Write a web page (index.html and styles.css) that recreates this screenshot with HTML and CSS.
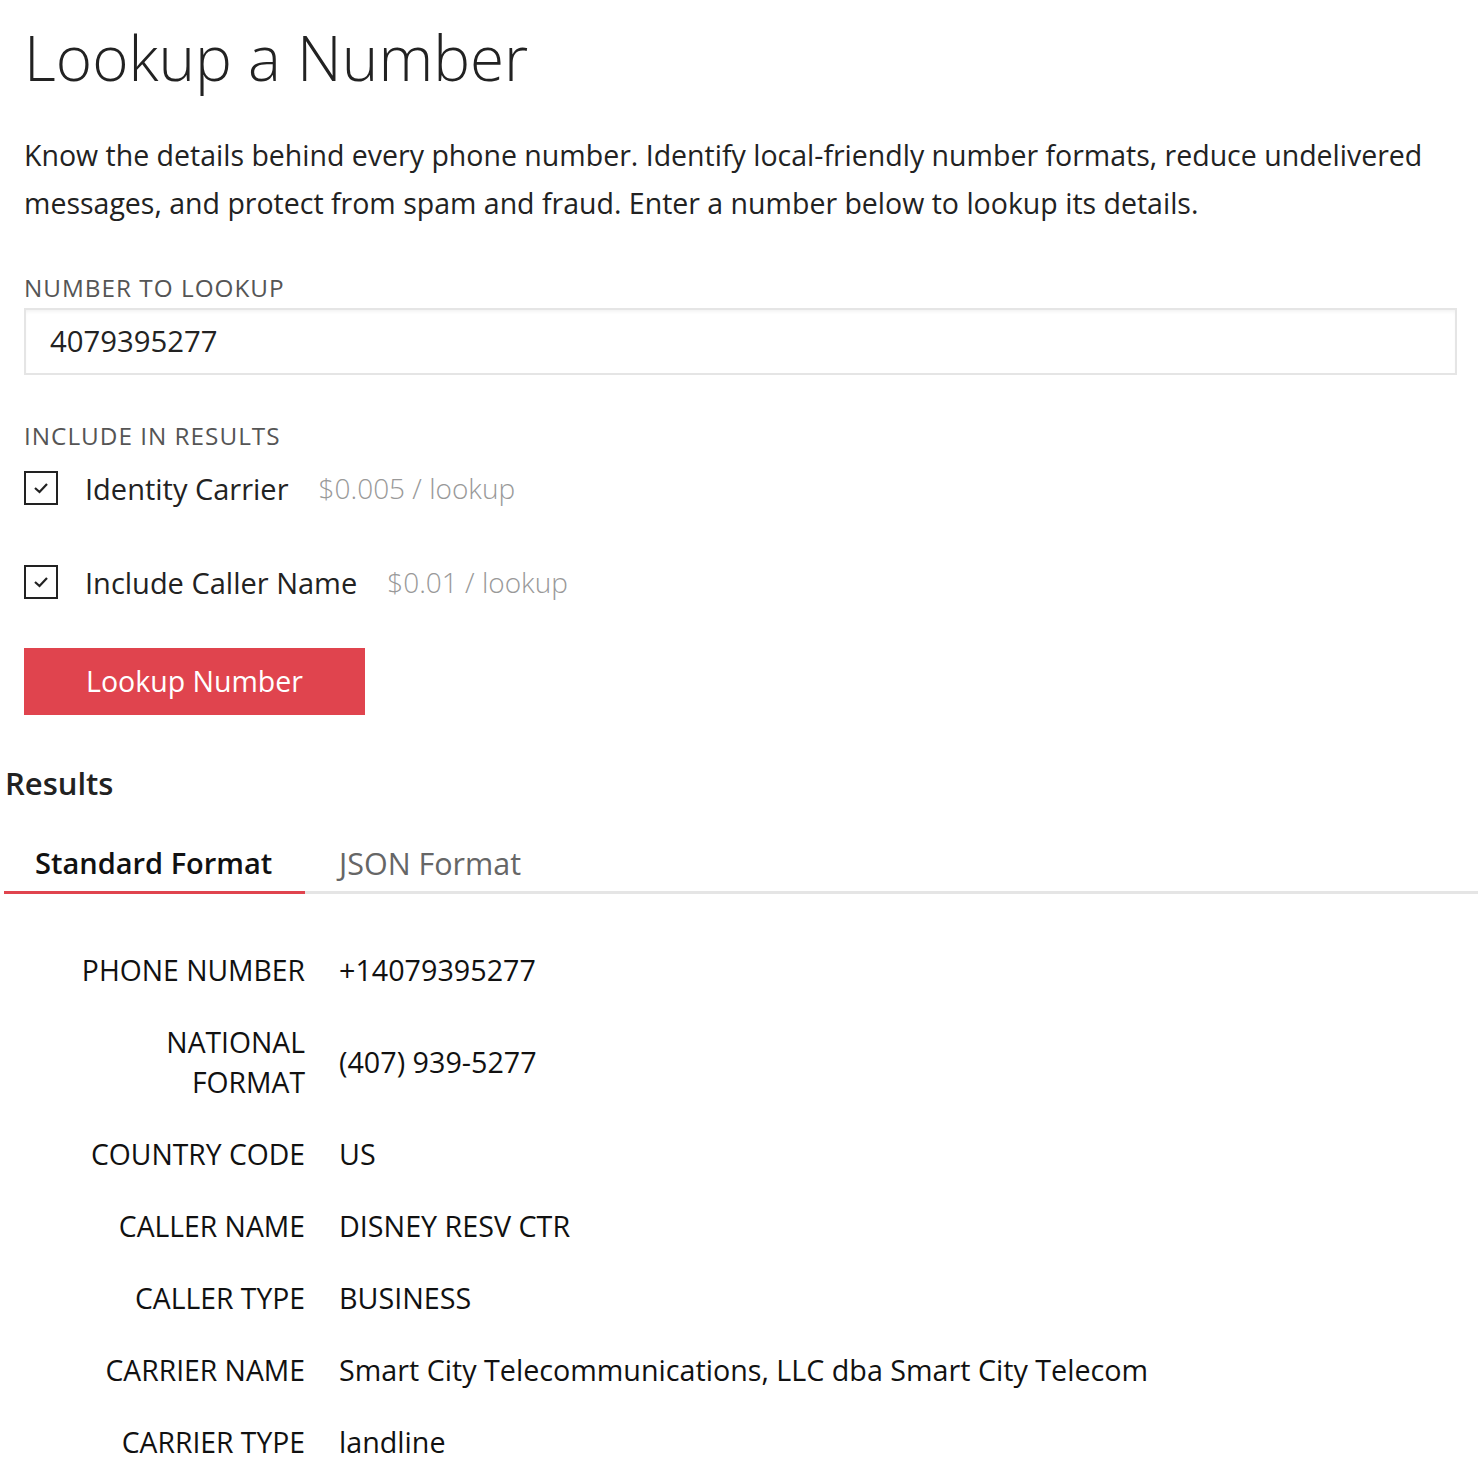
FILE: index.html
```html
<!DOCTYPE html>
<html>
<head>
<meta charset="utf-8">
<link rel="stylesheet" href="styles.css">
</head>
<body>
<div class="form-area">
  <h1 class="title">Lookup a Number</h1>
  <p class="intro">Know the details behind every phone number. Identify local-friendly number formats, reduce undelivered messages, and protect from spam and fraud. Enter a number below to lookup its details.</p>
  <div class="field-label">NUMBER TO LOOKUP</div>
  <div class="input-box">4079395277</div>
  <div class="field-label include">INCLUDE IN RESULTS</div>
  <div class="check-row">
    <span class="checkbox"><svg width="16" height="12" viewBox="0 0 16 12"><path d="M2 6 L6.5 10 L14 2" fill="none" stroke="#222" stroke-width="2.2"/></svg></span>
    <span class="check-label">Identity Carrier</span>
    <span class="price">$0.005 / lookup</span>
  </div>
  <div class="check-row">
    <span class="checkbox"><svg width="16" height="12" viewBox="0 0 16 12"><path d="M2 6 L6.5 10 L14 2" fill="none" stroke="#222" stroke-width="2.2"/></svg></span>
    <span class="check-label">Include Caller Name</span>
    <span class="price">$0.01 / lookup</span>
  </div>
  <div class="btn">Lookup Number</div>
</div>
<div class="results">
  <h2 class="results-title">Results</h2>
  <div class="tabs">
    <div class="tab active">Standard Format</div>
    <div class="tab">JSON Format</div>
    <div class="tab-fill"></div>
  </div>
  <div class="table">
    <div class="row"><div class="key">PHONE NUMBER</div><div class="val">+14079395277</div></div>
    <div class="row"><div class="key">NATIONAL<br>FORMAT</div><div class="val">(407) 939-5277</div></div>
    <div class="row"><div class="key">COUNTRY CODE</div><div class="val">US</div></div>
    <div class="row"><div class="key">CALLER NAME</div><div class="val">DISNEY RESV CTR</div></div>
    <div class="row"><div class="key">CALLER TYPE</div><div class="val">BUSINESS</div></div>
    <div class="row"><div class="key">CARRIER NAME</div><div class="val">Smart City Telecommunications, LLC dba Smart City Telecom</div></div>
    <div class="row"><div class="key">CARRIER TYPE</div><div class="val">landline</div></div>
  </div>
</div>
</body>
</html>
```
FILE: styles.css
```css
* { box-sizing: border-box; }
body {
  margin: 0;
  font-family: "Open Sans", "Liberation Sans", sans-serif;
  color: #222;
  background: #fff;
}
.form-area { padding: 0 21px 0 24px; }
.title {
  margin: 0;
  padding-top: 18px;
  font-size: 62px;
  font-weight: 300;
  line-height: 78px;
  color: #222;
}
.intro {
  margin: 35px 0 0;
  font-size: 28.5px;
  line-height: 48px;
  color: #222;
}
.field-label {
  margin-top: 46px;
  font-size: 24.3px;
  line-height: 30px;
  letter-spacing: 1px;
  color: #555;
}
.input-box {
  margin-top: 5px;
  height: 67px;
  border: 2px solid #e5e5e5;
  box-shadow: inset 0 3px 4px -2px #eee;
  padding: 0 24px;
  font-size: 29.3px;
  line-height: 63px;
  color: #222;
}
.field-label.include { margin-top: 46px; }
.check-row {
  display: flex;
  align-items: center;
  height: 40px;
  margin-top: 17px;
}
.check-row + .check-row { margin-top: 54px; }
.checkbox {
  width: 34px;
  height: 34px;
  border: 2px solid #222;
  display: flex;
  align-items: center;
  justify-content: center;
}
.check-label {
  margin-left: 27px;
  font-size: 29px;
  color: #222;
}
.price {
  margin-left: 30px;
  font-size: 28px;
  font-weight: 300;
  color: #999;
}
.btn {
  margin-top: 46px;
  width: 341px;
  height: 67px;
  background: #e0444e;
  color: #fff;
  font-size: 28.5px;
  line-height: 67px;
  text-align: center;
}
.results { padding-left: 4px; }
.results-title {
  margin: 48px 0 0 1px;
  font-size: 31px;
  font-weight: 600;
  line-height: 40px;
  color: #222;
}
.tabs {
  display: flex;
  margin-top: 40px;
  align-items: flex-end;
}
.tab {
  width: 301px;
  padding: 0 0 8px 34px;
  font-size: 30.5px;
  line-height: 40px;
  color: #666;
  border-bottom: 3px solid #e5e5e5;
}
.tab.active {
  padding-left: 31px;
  font-size: 29px;
  color: #111;
  font-weight: 600;
  border-bottom-color: #e0444e;
}
.tab-fill { flex: 1; border-bottom: 3px solid #e5e5e5; }
.table { margin-top: 40px; }
.row {
  display: flex;
  align-items: center;
  padding: 16px 0;
}
.key {
  width: 301px;
  text-align: right;
  font-size: 28.3px;
  line-height: 40px;
  color: #111;
}
.val {
  margin-left: 34px;
  font-size: 28.7px;
  line-height: 40px;
  color: #111;
}
```
